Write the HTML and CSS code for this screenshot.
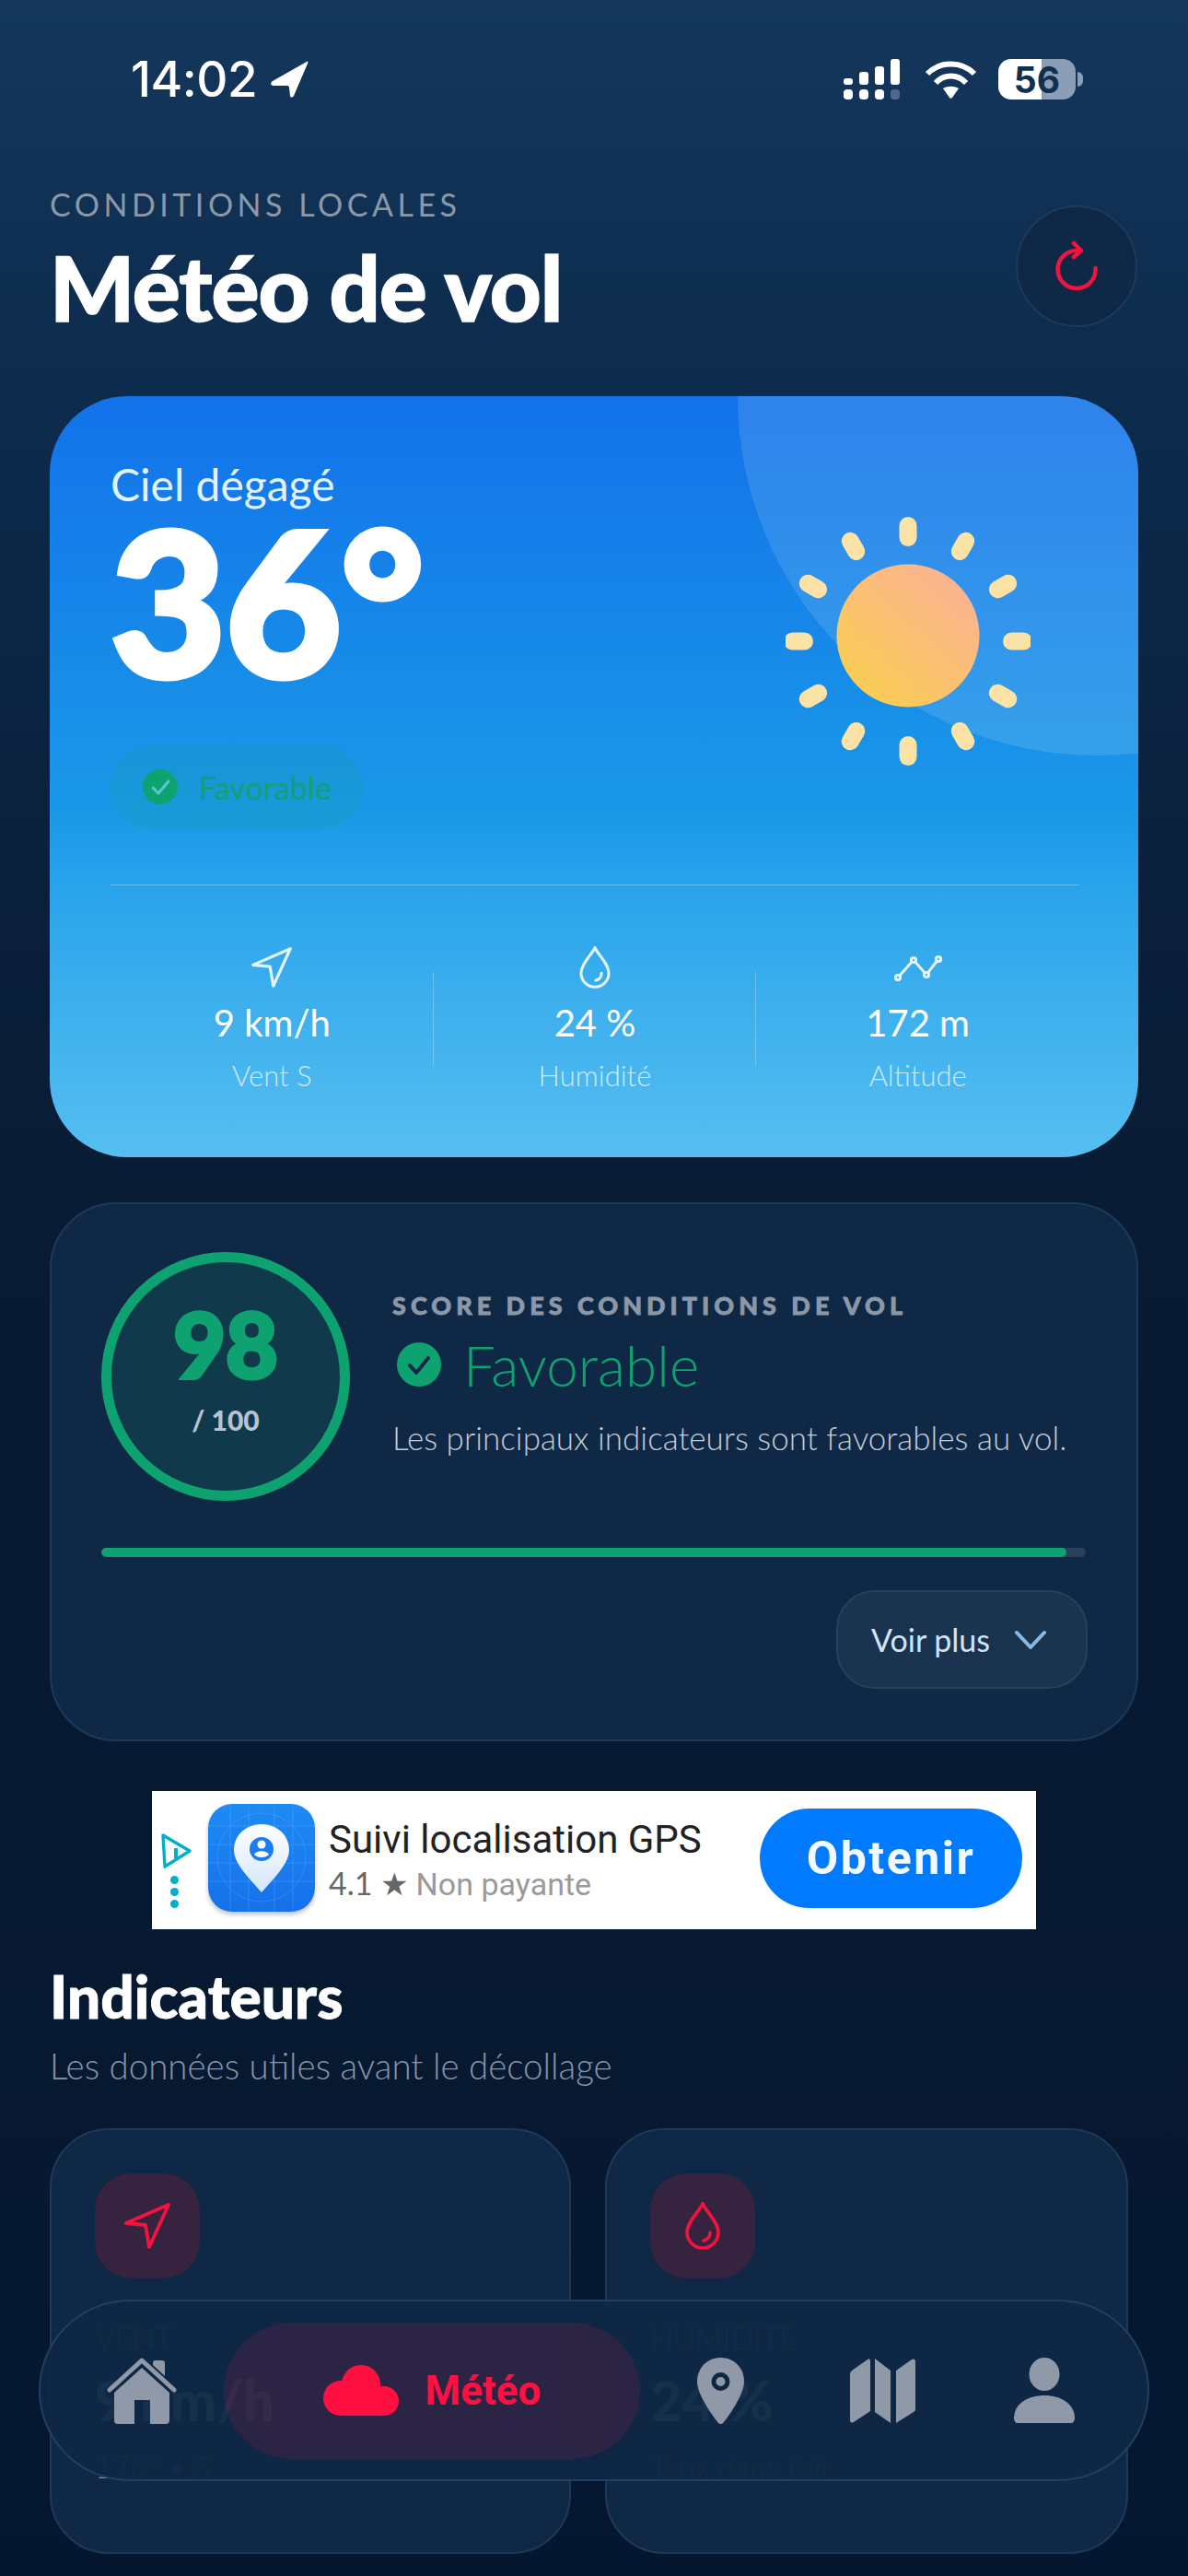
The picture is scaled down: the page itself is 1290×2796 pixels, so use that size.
FILE: index.html
```html
<!DOCTYPE html>
<html lang="fr">
<head>
  <meta charset="UTF-8" />
  <meta name="viewport" content="width=device-width, initial-scale=1.0"/>
  <title>Météo de vol</title>
  <link rel="stylesheet" href="styles.css">
</head>
<body>
  <div class="screen">
    <div class="status-bar">
      <div class="status-left">
        <span class="clock">14:02</span>
        <svg class="loc-arrow" width="42" height="40" viewBox="0 0 42 40"><path d="M40 1 3 22c-3 2-2 5 1 5h15c1 0 2 1 2 2l1 9c0 2 3 2 4 0L41 3c1-2 0-3-1-2Z" fill="#fff"/></svg>
      </div>
      <div class="status-right">
        <svg width="66" height="44" viewBox="0 0 66 44" fill="#fff">
          <rect x="0" y="21" width="10" height="7" rx="3"/>
          <rect x="17" y="14" width="10" height="14" rx="3"/>
          <rect x="34" y="8" width="10" height="20" rx="3"/>
          <rect x="56" y="0" width="10" height="28" rx="3" transform="translate(-5 0)"/>
          <rect x="0" y="33" width="10" height="11" rx="4"/>
          <rect x="17" y="33" width="10" height="11" rx="4"/>
          <rect x="34" y="33" width="10" height="11" rx="4"/>
          <rect x="51" y="33" width="10" height="11" rx="4" fill="#50698a"/>
        </svg>
        <svg class="wifi" width="57" height="42" viewBox="0 0 57 42" fill="none" stroke="#fff" stroke-width="6">
          <path d="M3 15C17 1 40 1 54 15"/>
          <path d="M12 25C21 15 36 15 45 25"/>
          <path d="M20 31C25 28 32 28 37 31L30 41C29 42 28 42 27 41Z" fill="#fff" stroke="none"/>
        </svg>
        <div class="battery"><span>56</span></div>
        <div class="battery-tip"></div>
      </div>
    </div>

    <header class="page-head">
      <div>
        <div class="eyebrow">CONDITIONS LOCALES</div>
        <h1>Météo de vol</h1>
      </div>
      <button class="refresh-btn">
        <svg width="50" height="56" viewBox="0 0 50 56" fill="none" stroke="#f5123f" stroke-width="4.5" stroke-linecap="round" stroke-linejoin="round">
          <path d="M26 11A20.5 20.5 0 1 0 45.500 30"/>
          <path d="M22 3 30 11 22 18"/>
        </svg>
      </button>
    </header>

    <section class="hero">
      <div class="hero-glow"></div>
      <div class="hero-top">
        <div class="hero-info">
          <div class="sky">Ciel dégagé</div>
          <div class="temp">36°</div>
          <div class="chip">
            <svg width="38" height="38" viewBox="0 0 38 38"><circle cx="19" cy="19" r="19" fill="#0fa271"/><path d="M11 20l6 6 11-13" fill="none" stroke="#5cc3d6" stroke-width="3" stroke-linecap="round" stroke-linejoin="round"/></svg>
            <span>Favorable</span>
          </div>
        </div>
        <svg class="sun" width="266" height="271" viewBox="0 0 266 271">
          <defs>
            <linearGradient id="sunFill" x1="0.15" y1="0.9" x2="0.85" y2="0.1">
              <stop offset="0" stop-color="#f9cd53"/>
              <stop offset="1" stop-color="#fcb392"/>
            </linearGradient>
          </defs>
          <g fill="#fbe2a6">
            <rect x="123.5" y="0" width="19" height="32" rx="9.5" transform="rotate(0 133 135)"/>
            <rect x="123.5" y="0" width="19" height="32" rx="9.5" transform="rotate(30 133 135)"/>
            <rect x="123.5" y="0" width="19" height="32" rx="9.5" transform="rotate(60 133 135)"/>
            <rect x="123.5" y="0" width="19" height="32" rx="9.5" transform="rotate(90 133 135)"/>
            <rect x="123.5" y="0" width="19" height="32" rx="9.5" transform="rotate(120 133 135)"/>
            <rect x="123.5" y="0" width="19" height="32" rx="9.5" transform="rotate(150 133 135)"/>
            <rect x="123.5" y="0" width="19" height="32" rx="9.5" transform="rotate(180 133 135)"/>
            <rect x="123.5" y="0" width="19" height="32" rx="9.5" transform="rotate(210 133 135)"/>
            <rect x="123.5" y="0" width="19" height="32" rx="9.5" transform="rotate(240 133 135)"/>
            <rect x="123.5" y="0" width="19" height="32" rx="9.5" transform="rotate(270 133 135)"/>
            <rect x="123.5" y="0" width="19" height="32" rx="9.5" transform="rotate(300 133 135)"/>
            <rect x="123.5" y="0" width="19" height="32" rx="9.5" transform="rotate(330 133 135)"/>
          </g>
          <circle cx="133" cy="129" r="77.5" fill="url(#sunFill)"/>
        </svg>
      </div>
      <div class="hero-divider"></div>
      <div class="stats">
        <div class="stat">
          <svg width="44" height="44" viewBox="0 0 50 50" fill="none" stroke="#e4f4fe" stroke-width="3.6" stroke-linejoin="round"><path d="M48 2 2 22 23 24 27 48Z"/></svg>
          <div class="stat-value">9 km/h</div>
          <div class="stat-label">Vent S</div>
        </div>
        <div class="stat">
          <svg width="34" height="46" viewBox="0 0 38 52" fill="none" stroke="#e4f4fe" stroke-width="3.4" stroke-linecap="round"><path d="M19 2C14 12 2 22 2 33a17 17 0 0 0 34 0C36 22 24 12 19 2Z"/><path d="M27 33c0 5-3 8-7 9"/></svg>
          <div class="stat-value">24 %</div>
          <div class="stat-label">Humidité</div>
        </div>
        <div class="stat">
          <svg width="52" height="46" viewBox="0 0 52 46" fill="#2ea6ee" stroke="#e4f4fe" stroke-width="3"><path d="M4 34 21 15 35 31 48 14" fill="none"/><circle cx="4" cy="34" r="2.6"/><circle cx="21" cy="15" r="2.6"/><circle cx="35" cy="31" r="2.6"/><circle cx="48" cy="14" r="2.6"/></svg>
          <div class="stat-value">172 m</div>
          <div class="stat-label">Altitude</div>
        </div>
      </div>
    </section>

    <section class="score-card">
      <div class="score-top">
        <div class="score-ring">
          <div class="score-num">98</div>
          <div class="score-max">/ 100</div>
        </div>
        <div class="score-text">
          <div class="score-title">SCORE DES CONDITIONS DE VOL</div>
          <div class="score-state">
            <svg width="48" height="48" viewBox="0 0 48 48"><circle cx="24" cy="24" r="24" fill="#0fa271"/><path d="M14 25l7 8 13-16" fill="none" stroke="#0f2845" stroke-width="4" stroke-linecap="round" stroke-linejoin="round"/></svg>
            <span>Favorable</span>
          </div>
          <div class="score-desc">Les principaux indicateurs sont favorables au vol.</div>
        </div>
      </div>
      <div class="progress"><div class="progress-fill" style="width: 98%"></div></div>
      <div class="score-actions">
        <button class="more-btn">
          <span>Voir plus</span>
          <svg width="36" height="22" viewBox="0 0 36 22" fill="none" stroke="#8ab8e2" stroke-width="4" stroke-linecap="round" stroke-linejoin="round"><path d="M3 3 18 19 33 3"/></svg>
        </button>
      </div>
    </section>

    <aside class="ad">
      <div class="ad-mark">
        <svg width="34" height="38" viewBox="0 0 34 38" fill="none" stroke="#00aecd" stroke-width="3.4" stroke-linejoin="round"><path d="M3 2 32 19 5 36Z"/><path d="M17 16v11" stroke-width="4"/><circle cx="17" cy="10" r="1.6" fill="#00aecd" stroke="none"/></svg>
        <div class="ad-dots"><i></i><i></i><i></i></div>
      </div>
      <div class="ad-icon">
        <svg width="116" height="117" viewBox="0 0 116 117">
          <defs>
            <linearGradient id="pinFill" x1="0" y1="0" x2="0" y2="1">
              <stop offset="0" stop-color="#fff"/>
              <stop offset="1" stop-color="#d3e6fb"/>
            </linearGradient>
          </defs>
          <g stroke="#fff" stroke-opacity="0.12" fill="none">
            <path d="M0 24H116M0 44H116M0 64H116M0 84H116M24 0V117M44 0V117M72 0V117M92 0V117"/>
            <circle cx="58" cy="58" r="48"/>
          </g>
          <path d="M58 22C41 22 28 34 28 50 28 66 48 84 58 96 68 84 88 66 88 50 88 34 75 22 58 22Z" fill="url(#pinFill)"/>
          <circle cx="58" cy="49" r="13" fill="#1a7cf0"/>
          <circle cx="58" cy="44" r="4.5" fill="#fff"/>
          <path d="M50 55c2-5 14-5 16 0-4 4-12 4-16 0Z" fill="#fff"/>
        </svg>
      </div>
      <div class="ad-text">
        <div class="ad-name">Suivi localisation GPS</div>
        <div class="ad-meta"><span class="ad-rate">4.1 ★</span> Non payante</div>
      </div>
      <button class="ad-btn">Obtenir</button>
    </aside>

    <section class="indicators">
      <h2>Indicateurs</h2>
      <p>Les données utiles avant le décollage</p>
      <div class="ind-grid">
        <div class="ind-card">
          <div class="ind-icon">
            <svg width="50" height="50" viewBox="0 0 50 50" fill="none" stroke="#f5123f" stroke-width="3.8" stroke-linejoin="round"><path d="M48 2 2 22 23 24 27 48Z"/></svg>
          </div>
          <div class="ind-label">VENT</div>
          <div class="ind-value">9 km/h</div>
          <div class="ind-sub">176° • S</div>
        </div>
        <div class="ind-card">
          <div class="ind-icon">
            <svg width="38" height="52" viewBox="0 0 38 52" fill="none" stroke="#f5123f" stroke-width="3.6" stroke-linecap="round"><path d="M19 2C14 12 2 22 2 33a17 17 0 0 0 34 0C36 22 24 12 19 2Z"/><path d="M27 33c0 5-3 8-7 9"/></svg>
          </div>
          <div class="ind-label">HUMIDITÉ</div>
          <div class="ind-value">24 %</div>
          <div class="ind-sub">Taux dans l'air</div>
        </div>
      </div>
    </section>

    <nav class="tabbar">
      <svg class="tab-home" width="76" height="72" viewBox="0 0 76 72" fill="#8f99a8">
        <path d="M50 8V6a3 3 0 0 1 3-3h7a3 3 0 0 1 3 3V20Z"/>
        <path d="M3 35 38 3 73 35" fill="none" stroke="#8f99a8" stroke-width="5" stroke-linecap="round" stroke-linejoin="round"/>
        <path d="M38 11 68 38V68a4 4 0 0 1-4 4H47V46H30V72H12a4 4 0 0 1-4-4V38Z"/>
      </svg>
      <div class="tab-active">
        <svg width="82" height="55" viewBox="0 0 82 55" fill="#ff1040">
          <circle cx="41" cy="21" r="21"/>
          <circle cx="19" cy="36" r="19"/>
          <circle cx="66" cy="39" r="16"/>
          <rect x="19" y="28" width="47" height="27"/>
        </svg>
        <span>Météo</span>
      </div>
      <svg class="tab-pin" width="51" height="72" viewBox="0 0 51 72" fill="#8f99a8">
        <path d="M25.5 0C11 0 0 11 0 26 0 40 17 64 23 71 24.500 72.500 26.500 72.500 28 71 34 64 51 40 51 26 51 11 40 0 25.500 0Z"/>
        <circle cx="25.500" cy="26" r="7.500" stroke="#0d2744" stroke-width="5"/>
      </svg>
      <svg class="tab-map" width="71" height="70" viewBox="0 0 71 70" fill="#8f99a8">
        <path d="M0 17Q0 15 2 13L19 1Q22-1 22 3V57L4 69Q0 71 0 66Z"/>
        <path d="M27 0 44 13V70L27 58Z"/>
        <path d="M50 13 67 1Q71-1 71 4V55Q71 57 69 58L50 70Z"/>
      </svg>
      <svg class="tab-user" width="66" height="71" viewBox="0 0 66 71" fill="#8f99a8">
        <ellipse cx="33" cy="18" rx="16.500" ry="18"/>
        <path d="M0 66C0 50 15 41 33 41 51 41 66 50 66 66 66 69 64 71 62 71H4C2 71 0 69 0 66Z"/>
      </svg>
    </nav>
  </div>
</body>
</html>
```
FILE: styles.css
```css
* {
  margin: 0;
  padding: 0;
  box-sizing: border-box;
  font-family: 'Lato', sans-serif;
}

html, body {
  background: #061630;
}

.screen {
  position: relative;
  width: 1290px;
  height: 2796px;
  overflow: hidden;
  color: #fff;
  background: linear-gradient(180deg, #14375c 0, #0d2c4e 400px, #0a1f3a 1000px, #081a31 1500px, #081a31 2100px, #051630 2796px);
}

/* status bar */
.status-bar {
  height: 170px;
  padding: 64px 114px 0 142px;
  display: flex;
  justify-content: space-between;
  align-items: flex-start;
}

.status-left {
  display: flex;
  align-items: center;
  gap: 14px;
  height: 44px;
}

.clock {
  font-family: 'Inter', sans-serif;
  font-size: 53px;
  font-weight: 500;
  letter-spacing: -0.5px;
}

.status-right {
  display: flex;
  align-items: center;
  height: 44px;
}

.wifi {
  margin-left: 22px;
  margin-right: 23px;
}

.battery {
  width: 84px;
  height: 44px;
  border-radius: 14px;
  background: linear-gradient(90deg, #fff 56%, #8b9eb5 56%);
  display: flex;
  align-items: center;
  justify-content: center;
}

.battery span {
  font-family: 'Inter', sans-serif;
  font-size: 39px;
  font-weight: 700;
  color: #10304f;
}

.battery-tip {
  width: 6px;
  height: 16px;
  margin-left: 2px;
  border-radius: 0 6px 6px 0;
  background: #8b9eb5;
}

/* header */
.page-head {
  display: flex;
  justify-content: space-between;
  align-items: flex-start;
  padding: 32px 55px 0 54px;
  height: 260px;
}

.eyebrow {
  font-size: 34px;
  line-height: 40px;
  letter-spacing: 4.5px;
  color: #8b98a8;
}

h1 {
  margin-top: 20px;
  font-size: 97px;
  line-height: 100px;
  font-weight: 900;
  letter-spacing: -1px;
  -webkit-text-stroke: 1.5px #fff;
}

.refresh-btn {
  width: 132px;
  height: 132px;
  margin-top: 21px;
  border-radius: 50%;
  border: 2px solid #1d3a58;
  background: #0f2845;
  display: flex;
  align-items: center;
  justify-content: center;
}

/* hero card */
.hero {
  position: relative;
  overflow: hidden;
  width: 1182px;
  height: 826px;
  margin-left: 54px;
  padding: 70px 64px 0 66px;
  border-radius: 84px;
  background: linear-gradient(180deg, #1272ea 0%, #1a99e8 55%, #2ba5ec 66%, #56bef0 100%);
}

.hero-glow {
  position: absolute;
  top: -390px;
  right: -345px;
  width: 780px;
  height: 780px;
  border-radius: 50%;
  background: rgba(255, 255, 255, 0.12);
}

.hero-top {
  position: relative;
  display: flex;
  justify-content: space-between;
  height: 460px;
}

.sky {
  font-size: 48px;
  line-height: 52px;
  color: #e3f1fd;
}

.temp {
  margin-top: 4px;
  font-size: 216px;
  line-height: 190px;
  font-weight: 900;
  -webkit-text-stroke: 7px #fff;
}

.chip {
  display: flex;
  align-items: center;
  gap: 23px;
  width: 275px;
  height: 92px;
  margin-top: 62px;
  padding-left: 35px;
  border-radius: 46px;
  background: rgba(15, 160, 112, 0.13);
  font-size: 34px;
  color: #12a073;
}

.sun {
  margin-top: 61px;
  margin-right: 53px;
}

.hero-divider {
  position: relative;
  height: 1px;
  background: rgba(255, 255, 255, 0.28);
}

.stats {
  position: relative;
  display: grid;
  grid-template-columns: repeat(3, 1fr);
  padding-top: 66px;
}

.stat {
  position: relative;
  display: flex;
  flex-direction: column;
  align-items: center;
}

.stat svg {
  height: 46px;
}

.stat + .stat::before {
  content: "";
  position: absolute;
  left: -1px;
  top: 28px;
  height: 102px;
  width: 1px;
  background: rgba(255, 255, 255, 0.25);
}

.stat-value {
  margin-top: 12px;
  font-size: 40px;
  line-height: 50px;
  font-weight: 400;
}

.stat-label {
  margin-top: 12px;
  font-size: 31px;
  line-height: 40px;
  font-weight: 300;
  color: #cbeafc;
}

/* score card */
.score-card {
  width: 1182px;
  height: 585px;
  margin: 49px 0 0 54px;
  padding: 52px 55px 0 54px;
  border-radius: 72px;
  border: 2px solid #1d3a58;
  background: #0f2845;
}

.score-top {
  display: flex;
  gap: 46px;
}

.score-ring {
  width: 270px;
  height: 270px;
  flex-shrink: 0;
  border-radius: 50%;
  border: 11px solid #0fa271;
  background: #103a4b;
  display: flex;
  flex-direction: column;
  align-items: center;
  padding-top: 38px;
}

.score-num {
  font-size: 98px;
  line-height: 100px;
  font-weight: 900;
  color: #0fa271;
  -webkit-text-stroke: 4px #0fa271;
}

.score-max {
  margin-top: 15px;
  font-size: 30px;
  line-height: 36px;
  font-weight: 900;
  color: #b9c2cf;
}

.score-text {
  padding-top: 42px;
}

.score-title {
  font-size: 27px;
  line-height: 32px;
  font-weight: 900;
  letter-spacing: 5px;
  color: #8b98a8;
  -webkit-text-stroke: 0.8px #8b98a8;
  white-space: nowrap;
}

.score-state {
  display: flex;
  align-items: center;
  gap: 24px;
  margin: 24px 0 0 5px;
  height: 48px;
  font-size: 62px;
  font-weight: 300;
  color: #0fa271;
}

.score-desc {
  margin-top: 33px;
  font-size: 35px;
  line-height: 44px;
  font-weight: 300;
  color: #c3ccd8;
  white-space: nowrap;
}

.progress {
  height: 10px;
  margin-top: 51px;
  border-radius: 5px;
  background: #2a3f59;
  overflow: hidden;
}

.progress-fill {
  height: 100%;
  border-radius: 5px;
  background: #0fa271;
}

.score-actions {
  display: flex;
  justify-content: flex-end;
  margin: 36px -2px 0 0;
}

.more-btn {
  display: flex;
  align-items: center;
  gap: 26px;
  width: 273px;
  height: 107px;
  padding-left: 36px;
  border-radius: 42px;
  border: 2px solid #24415f;
  background: #1a334f;
  color: #d3e3f3;
  font-size: 34px;
}

/* ad */
.ad {
  display: flex;
  align-items: center;
  width: 960px;
  height: 150px;
  margin: 54px 0 0 165px;
  background: #fff;
  color: #222;
}

.ad-mark {
  width: 61px;
  padding: 46px 0 0 9px;
  align-self: stretch;
}

.ad-dots {
  display: flex;
  flex-direction: column;
  gap: 4px;
  margin: 5px 0 0 11px;
}

.ad-dots i {
  display: block;
  width: 9px;
  height: 9px;
  border-radius: 50%;
  background: #00aecd;
}

.ad-icon {
  width: 116px;
  height: 117px;
  margin-bottom: 5px;
  border-radius: 26px;
  overflow: hidden;
  background: linear-gradient(180deg, #1d8bf5, #1670ea);
  box-shadow: 0 3px 5px rgba(0, 0, 0, 0.25);
  flex-shrink: 0;
}

.ad-text {
  margin-left: 15px;
  flex: 1;
}

.ad-name {
  font-family: 'Roboto', sans-serif;
  font-size: 42px;
  line-height: 48px;
  color: #222;
  padding-top: 2px;
}

.ad-meta {
  margin-top: 1px;
  font-family: 'Roboto', sans-serif;
  font-size: 34px;
  line-height: 44px;
  color: #9a9a9e;
}

.ad-rate {
  color: #666;
}

.ad-btn {
  width: 285px;
  height: 108px;
  margin: 0 15px 4px 0;
  border: none;
  border-radius: 54px;
  background: #007aff;
  color: #f4f8ff;
  font-family: 'Roboto', sans-serif;
  font-size: 50px;
  font-weight: 700;
  letter-spacing: 2.5px;
}

/* indicators */
.indicators {
  padding: 38px 0 0 54px;
}

h2 {
  font-size: 64px;
  line-height: 70px;
  font-weight: 900;
  -webkit-text-stroke: 0.8px #fff;
}

.indicators p {
  margin-top: 17px;
  font-size: 38.5px;
  line-height: 46px;
  font-weight: 300;
  color: #8795a7;
}

.ind-grid {
  display: grid;
  grid-template-columns: 566px 568px;
  gap: 37px;
  margin-top: 45px;
}

.ind-card {
  height: 462px;
  padding: 47px 0 0 47px;
  border-radius: 64px;
  border: 2px solid #1d3a58;
  background: #0f2845;
}

.ind-icon {
  width: 114px;
  height: 114px;
  border-radius: 40px;
  background: #36233f;
  display: flex;
  align-items: center;
  justify-content: center;
}

.ind-label {
  margin-top: 44px;
  font-size: 33px;
  line-height: 40px;
  font-weight: 300;
  color: #8b98a8;
}

.ind-value {
  margin-top: 3px;
  font-size: 60px;
  line-height: 90px;
  font-weight: 900;
}

.ind-sub {
  margin-top: 5px;
  font-size: 33px;
  line-height: 44px;
  font-weight: 300;
  color: #8b98a8;
}

/* bottom nav */
.tabbar {
  position: absolute;
  left: 42px;
  top: 2496px;
  width: 1206px;
  height: 197px;
  display: flex;
  align-items: center;
  padding-left: 72px;
  border-radius: 99px;
  border: 2px solid #21405f;
  background: rgba(13, 39, 68, 0.965);
}

.tab-active {
  display: flex;
  align-items: center;
  justify-content: center;
  gap: 29px;
  width: 452px;
  height: 148px;
  margin-left: 51px;
  border-radius: 74px;
  background: rgba(255, 20, 70, 0.13);
  color: #ff1040;
}

.tab-active span {
  font-family: 'Roboto', sans-serif;
  font-size: 44px;
  font-weight: 700;
}

.tab-pin {
  margin-left: 62px;
}

.tab-map {
  margin-left: 115px;
}

.tab-user {
  margin-left: 107px;
}
```
